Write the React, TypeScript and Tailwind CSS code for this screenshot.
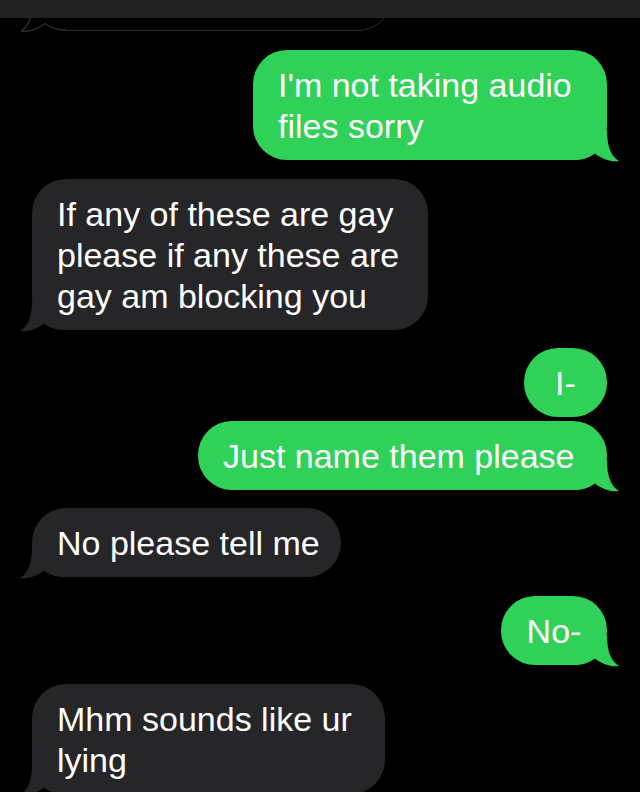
type Msg = {
  from: "me" | "them";
  lines: string[];
  width: number;
  tail?: boolean;
  center?: boolean;
  gap: string;
};

const messages: Msg[] = [
  { from: "me", lines: ["I'm not taking audio", "files sorry"], width: 354, tail: true, gap: "mt-[19px]" },
  {
    from: "them",
    lines: ["If any of these are gay", "please if any these are", "gay am blocking you"],
    width: 396,
    tail: true,
    gap: "mt-[19px]",
  },
  { from: "me", lines: ["I-"], width: 83, center: true, gap: "mt-[18px]" },
  { from: "me", lines: ["Just name them please"], width: 409, tail: true, gap: "mt-[4px]" },
  { from: "them", lines: ["No please tell me"], width: 309, tail: true, gap: "mt-[18px]" },
  { from: "me", lines: ["No-"], width: 106, tail: true, center: true, gap: "mt-[19px]" },
  { from: "them", lines: ["Mhm sounds like ur", "lying"], width: 353, tail: true, gap: "mt-[19px]" },
];

const tailPath = "M0 0 H33 C33 17 37 26 45 31 C38 32.5 28 29 21 23.5 C15 28 8 30 0 30 Z";
const tailEdge = "M33 0 C33 17 37 26 45 31 C38 32.5 28 29 21 23.5 C15 28 8 30 0 30";

function Tail({ side, fill, stroke }: { side: "me" | "them"; fill: string; stroke?: string }) {
  return (
    <svg
      width="45"
      height="32"
      viewBox="0 0 45 32"
      className={
        side === "me"
          ? "absolute right-[-12px] bottom-[-2px]"
          : "absolute left-[-12px] bottom-[-2px] -scale-x-100"
      }
    >
      <path d={tailPath} fill={fill} />
      {stroke && <path d={tailEdge} fill="none" stroke={stroke} strokeWidth="1.5" />}
    </svg>
  );
}

function Bubble({ msg }: { msg: Msg }) {
  const mine = msg.from === "me";
  const fill = mine ? "#30d158" : "#262629";
  return (
    <div
      className={`relative shrink-0 rounded-[34px] pt-[15px] pb-[13px] ${msg.center ? "text-center" : "pl-[25px]"} ${
        mine ? "self-end mr-[33px] bg-[#30d158]" : "self-start ml-[32px] bg-[#262629]"
      } ${msg.gap}`}
      style={{ width: msg.width }}
    >
      {msg.tail && <Tail side={msg.from} fill={fill} />}
      <p className="relative whitespace-nowrap font-['Liberation_Sans',Arial,sans-serif] text-[34px] leading-[41px] text-white">
        {msg.lines.map((line, i) => (
          <span key={line}>
            {i > 0 && <br />}
            {line}
          </span>
        ))}
      </p>
    </div>
  );
}

export default function App() {
  return (
    <div className="flex h-[792px] w-[640px] flex-col overflow-hidden bg-black">
      <div className="h-[18px] w-full shrink-0 bg-[#232324]" />
      <div className="flex flex-1 flex-col overflow-hidden">
        {/* earlier message, mostly scrolled under the bar */}
        <div className="relative -mt-[55px] ml-[32px] h-[68px] w-[360px] shrink-0 self-start rounded-[34px] border-[1.5px] border-[#2c2c2e] bg-black">
          <Tail side="them" fill="#000000" stroke="#2c2c2e" />
        </div>
        {messages.map((msg) => (
          <Bubble key={msg.lines.join(" ")} msg={msg} />
        ))}
      </div>
    </div>
  );
}
